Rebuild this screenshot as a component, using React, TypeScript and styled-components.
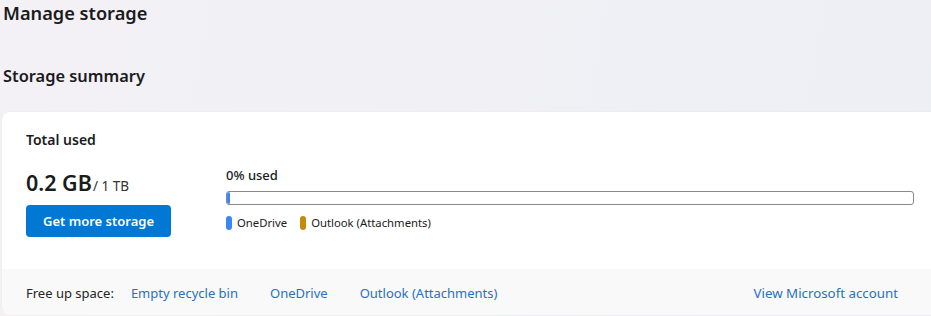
import React from 'react';
import styled, { createGlobalStyle } from 'styled-components';

const GlobalStyle = createGlobalStyle`
  html, body {
    margin: 0;
    padding: 0;
    overflow: hidden;
  }
  body {
    font-family: "Segoe UI", "Noto Sans", "Liberation Sans", sans-serif;
    color: #1b1b1b;
    background: linear-gradient(100deg, #f3f1f6 0%, #f0f0f5 50%, #eceff4 100%);
    min-height: 316px;
  }
`;

const Page = styled.div`
  width: 931px;
  height: 316px;
  padding: 0 0 0 2px;
  box-sizing: border-box;
  overflow: hidden;
`;

const Title = styled.h1`
  margin: 0;
  padding: 1px 0 0 1px;
  font-size: 18.2px;
  font-weight: 600;
  line-height: 24px;
`;

const Subtitle = styled.h2`
  margin: 40px 0 0 1px;
  font-size: 16.4px;
  font-weight: 600;
  line-height: 22px;
`;

const Card = styled.section`
  margin-top: 25px;
  width: 936px;
  background: #ffffff;
  border-radius: 8px;
  overflow: hidden;
  box-shadow: 0 0 2px rgba(0, 0, 0, 0.06);
`;

const CardBody = styled.div`
  padding: 18px 24px 32px 24px;
`;

const CardHeading = styled.h3`
  margin: 0;
  font-size: 14px;
  font-weight: 600;
  line-height: 20px;
`;

const SummaryRow = styled.div`
  display: flex;
  margin-top: 15px;
`;

const LeftColumn = styled.div`
  width: 200px;
  display: flex;
  flex-direction: column;
  align-items: flex-start;
`;

const Amount = styled.div`
  display: flex;
  align-items: baseline;
  margin-top: 5px;
`;

const Used = styled.span`
  font-size: 21.5px;
  font-weight: 600;
  line-height: 26px;
`;

const Quota = styled.span`
  font-size: 13.5px;
  color: #333;
  margin-left: 1px;
`;

const PrimaryButton = styled.button`
  margin-top: 9px;
  height: 32px;
  padding: 0 17px;
  border: none;
  border-radius: 4px;
  background: #0078d4;
  color: #ffffff;
  font-family: inherit;
  font-size: 13px;
  font-weight: 600;
  cursor: pointer;
`;

const RightColumn = styled.div`
  flex: 1;
  display: flex;
  flex-direction: column;
`;

const Percent = styled.div`
  font-size: 13px;
  font-weight: 500;
  line-height: 18px;
  padding-top: 1px;
`;

const Track = styled.div`
  margin-top: 7px;
  height: 14px;
  border: 1px solid #8a8a8a;
  border-radius: 3px;
  box-sizing: border-box;
  overflow: hidden;
  display: flex;
`;

const Fill = styled.div<{ $color: string }>`
  height: 100%;
  background: ${(p) => p.$color};
  border-radius: 2px;
`;

const Legend = styled.div`
  display: flex;
  align-items: center;
  gap: 13px;
  margin-top: 10px;
`;

const LegendItem = styled.div`
  display: flex;
  align-items: center;
  gap: 5px;
  font-size: 11.3px;
  line-height: 16px;
`;

const Swatch = styled.span<{ $color: string }>`
  width: 6px;
  height: 14px;
  border-radius: 3px;
  background: ${(p) => p.$color};
`;

const Footer = styled.div`
  background: #f9f9f9;
  height: 45px;
  padding: 1px 24px 0 24px;
  display: flex;
  align-items: center;
  font-size: 13px;
`;

const FooterLabel = styled.span`
  color: #242424;
  margin-right: 17px;
`;

const FooterLink = styled.a<{ $push?: boolean }>`
  color: #2a6fc6;
  text-decoration: none;
  margin-right: 32px;
  margin-left: ${(p) => (p.$push ? 'auto' : '0')};
  cursor: pointer;

  &:last-child {
    margin-right: 16px;
    font-size: 13.3px;
  }
`;

const legend = [
  { name: 'OneDrive', color: '#3a86f7', usage: 0.3 },
  { name: 'Outlook (Attachments)', color: '#c48a0e', usage: 0 },
];

export default function App() {
  return (
    <Page>
      <GlobalStyle />
      <Title>Manage storage</Title>
      <Subtitle>Storage summary</Subtitle>
      <Card>
        <CardBody>
          <CardHeading>Total used</CardHeading>
          <SummaryRow>
            <LeftColumn>
              <Amount>
                <Used>0.2 GB</Used>
                <Quota>/ 1 TB</Quota>
              </Amount>
              <PrimaryButton>Get more storage</PrimaryButton>
            </LeftColumn>
            <RightColumn>
              <Percent>0% used</Percent>
              <Track>
                {legend.map((l) => (
                  <Fill
                    key={l.name}
                    $color={l.color}
                    style={{ width: l.usage > 0 ? `max(3px, ${l.usage}%)` : 0 }}
                  />
                ))}
              </Track>
              <Legend>
                {legend.map((l) => (
                  <LegendItem key={l.name}>
                    <Swatch $color={l.color} />
                    {l.name}
                  </LegendItem>
                ))}
              </Legend>
            </RightColumn>
          </SummaryRow>
        </CardBody>
        <Footer>
          <FooterLabel>Free up space:</FooterLabel>
          <FooterLink>Empty recycle bin</FooterLink>
          <FooterLink>OneDrive</FooterLink>
          <FooterLink>Outlook (Attachments)</FooterLink>
          <FooterLink $push>View Microsoft account</FooterLink>
        </Footer>
      </Card>
    </Page>
  );
}
